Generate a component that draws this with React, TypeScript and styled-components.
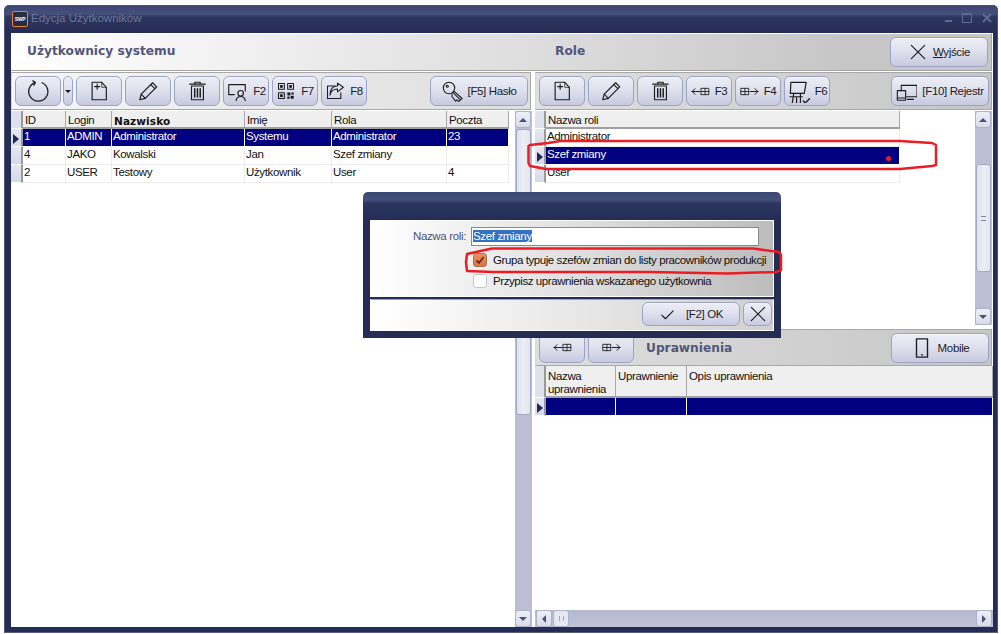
import React from 'react';
import styled, { createGlobalStyle } from 'styled-components';

const GlobalStyle = createGlobalStyle`
  html, body {
    margin: 0;
    padding: 0;
    background: #fff;
  }
  body {
    font-family: "Liberation Sans", Arial, sans-serif;
    font-size: 11.5px;
    letter-spacing: -0.35px;
    color: #111;
  }
`;

const ink = '#1c1c1c';

const Icon = ({ size = 22, children }: { size?: number; children: React.ReactNode }) => (
  <svg width={size} height={size} viewBox="0 0 24 24" fill="none" stroke={ink} strokeWidth={1.25} strokeLinecap="round" strokeLinejoin="round">
    {children}
  </svg>
);

const RefreshIcon = () => (
  <Icon size={25}>
    <path d="M15.5 3.6A9.2 9.2 0 1 1 8.6 3.4" />
    <path d="M6.6 1.8 9 3.4 7.6 6" />
  </Icon>
);
const NewIcon = () => (
  <Icon>
    <path d="M4.5 2.5H15L20 8V21.5H4.5Z" />
    <path d="M15 2.5V8H20" strokeWidth={0.8} />
    <path d="M10 4.5V10M7.2 7.2H12.8" />
  </Icon>
);
const PencilIcon = () => (
  <Icon>
    <path d="M3 21.5 4.6 15.5 17 3 21.5 7.5 9 20Z" />
    <path d="M15 5 19.5 9.5M4.6 15.5 9 20" />
  </Icon>
);
const TrashIcon = () => (
  <Icon>
    <path d="M6 6.5H19V21.5H6Z" />
    <path d="M4 4.5H21M9.5 4.5V2.5H15.5V4.5" />
    <path d="M9.5 9.5V18.5M12.5 9.5V18.5M15.5 9.5V18.5" strokeWidth={1.6} />
  </Icon>
);
const UserScreenIcon = () => (
  <Icon>
    <path d="M9 16H3V5H21V12" />
    <circle cx="16" cy="14.5" r="3" />
    <path d="M11 22.5C11.5 19 13.5 18 16 18S20.5 19 21 22.5" />
  </Icon>
);
const QrIcon = () => (
  <Icon size={20}>
    <path d="M3 3H10V10H3ZM14 3H21V10H14ZM3 14H10V21H3Z" />
    <path d="M5.5 5.5H7.5V7.5H5.5ZM16.5 5.5H18.5V7.5H16.5ZM5.5 16.5H7.5V18.5H5.5Z" fill={ink} />
    <path d="M14 14H17V17H14ZM18 18H21V21H18ZM14 19H16V21H14ZM19 14H21V16H19Z" fill={ink} strokeWidth={0.5} />
  </Icon>
);
const ShareIcon = () => (
  <Icon size={20}>
    <path d="M12 6H3V21H19V14" />
    <path d="M6 17C7 11.5 10.5 9.5 15 9.5V13L22 7.5 15 2.5V6C9 6 6 10.5 6 17Z" />
  </Icon>
);
const KeyIcon = () => (
  <Icon size={21}>
    <circle cx="8" cy="8" r="6.5" />
    <circle cx="6" cy="6" r="1.2" />
    <path d="M12.5 13 21 21.5 19 23.5 17 21.5 15.5 23 11.5 18 11.5 14.5" />
    <path d="M13.5 11.5 23 20 21 21.5" />
  </Icon>
);
const TableArrowLeft = () => (
  <Icon size={19}>
    <path d="M1.5 12H11M1.5 12 5 8.5M1.5 12 5 15.5" />
    <path d="M13 8H22.5V16H13ZM17.7 8V16M13 12H22.5" strokeWidth={1.1} />
  </Icon>
);
const TableArrowRight = () => (
  <Icon size={19}>
    <path d="M22.5 12H13M22.5 12 19 8.5M22.5 12 19 15.5" />
    <path d="M1.5 8H11V16H1.5ZM6.2 8V16M1.5 12H11" strokeWidth={1.1} />
  </Icon>
);
const BoardIcon = () => (
  <Icon size={23}>
    <path d="M4 2.5H20L18 14H3.5Z" />
    <path d="M3 17.5H16M7 14 5.5 24M14 14V24M10 17.5V24" />
    <path d="M17 22 19 24 23.5 19.5" strokeWidth={1.4} />
  </Icon>
);
const DevicesIcon = () => (
  <Icon size={21}>
    <path d="M6 11V5H24V18H12" />
    <path d="M1.5 11H11V22H1.5ZM1.5 19.5H11" />
    <path d="M13 21H20" />
  </Icon>
);
const PhoneIcon = () => (
  <Icon size={22}>
    <path d="M6 2H18V22H6Z" strokeWidth={1.5} />
    <path d="M11.5 19.5H12.5" strokeWidth={1.5} />
  </Icon>
);
const CloseIcon = ({ size = 20 }: { size?: number }) => (
  <Icon size={size}>
    <path d="M4 4 20 20M20 4 4 20" strokeWidth={1.4} />
  </Icon>
);
const CheckIcon = () => (
  <Icon size={17}>
    <path d="M4 13 9 18 20 7" strokeWidth={1.6} />
  </Icon>
);

const Page = styled.div`
  position: relative;
  width: 1001px;
  height: 634px;
  overflow: hidden;
  background: #fff;
  padding: 5px 3px 1px 4px;
  box-sizing: border-box;
`;

const Window = styled.div`
  height: 628px;
  display: flex;
  flex-direction: column;
  box-sizing: border-box;
  border: 1px solid #4c5470;
  border-bottom-color: #5a6284;
  border-radius: 5px 5px 0 0;
  background: #252d55;
  padding: 0 4px 5px 6px;
`;

const TitleBar = styled.div`
  height: 27px;
  flex: none;
  margin: 0 -4px 0 -6px;
  padding: 5px 5px 0 7px;
  box-sizing: border-box;
  display: flex;
  align-items: flex-start;
  background: linear-gradient(#3c4672 0, #44507c 8px, #2d3660 11px, #252d55 27px);
  border-radius: 4px 4px 0 0;
`;

const AppLogo = styled.div`
  width: 16px;
  height: 16px;
  box-sizing: border-box;
  border: 1px solid #e8803c;
  border-radius: 2px;
  background: #2a2d3c;
  color: #fff;
  font-size: 5px;
  font-weight: bold;
  line-height: 14px;
  text-align: center;
`;

const WindowTitle = styled.div`
  margin-left: 3px;
  font-size: 11.5px;
  line-height: 15px;
  letter-spacing: 0;
  color: #6d7898;
`;

const WindowControls = styled.div`
  margin-left: auto;
  margin-top: 2px;
  display: flex;
  align-items: flex-end;
  gap: 10px;
`;

const MinimizeGlyph = styled.div`
  width: 7px;
  height: 2px;
  margin-bottom: 1px;
  background: #5f6a8e;
`;

const MaximizeGlyph = styled.div`
  width: 8px;
  height: 7px;
  border: 1px solid #5f6a8e;
  border-top-width: 2px;
`;

const Content = styled.div`
  flex: 1;
  min-height: 0;
  display: flex;
  flex-direction: column;
  background: #fff;
`;

const Header = styled.div`
  height: 38px;
  flex: none;
  margin-right: 1px;
  box-sizing: border-box;
  padding: 3px 3px 0 16px;
  display: flex;
  align-items: flex-start;
  border-top: 1px solid #fff;
  border-bottom: 1px solid #a4a4a4;
  border-right: 1px solid #a4a4a4;
  background: linear-gradient(90deg, #fff 0, #dcdcdc 55%, #c6c6c6 85%);
`;

const SectionTitle = styled.div<{ $width?: number }>`
  width: ${({ $width }) => ($width ? `${$width}px` : 'auto')};
  font-family: "DejaVu Sans", Verdana, sans-serif;
  font-size: 12.2px;
  font-weight: bold;
  letter-spacing: 0;
  line-height: 28px;
  color: #50577a;
`;

const Body = styled.div`
  flex: 1;
  min-height: 0;
  display: flex;
  gap: 3px;
  margin-top: 1px;
`;

const LeftColumn = styled.div`
  width: 521px;
  display: flex;
  flex-direction: column;
`;

const RightColumn = styled.div`
  width: 458px;
  display: flex;
  flex-direction: column;
`;

const Toolbar = styled.div<{ $from: string; $to: string; $height?: number }>`
  height: ${({ $height }) => $height ?? 38}px;
  flex: none;
  box-sizing: border-box;
  padding-left: 3px;
  padding-right: 2px;
  margin-right: 1px;
  display: flex;
  align-items: center;
  gap: 3px;
  border: 1px solid #a8a8a8;
  border-left-color: #d8d8d8;
  background: linear-gradient(90deg, ${({ $from }) => $from}, ${({ $to }) => $to});
`;

const ToolButton = styled.div<{ $width?: number; $push?: boolean; $tight?: boolean }>`
  width: ${({ $width }) => $width ?? 46}px;
  height: 30px;
  flex: none;
  box-sizing: border-box;
  display: flex;
  align-items: center;
  justify-content: center;
  gap: 5px;
  margin-left: ${({ $push, $tight }) => ($push ? 'auto' : $tight ? '-1px' : '0')};
  border: 1px solid #9da3c4;
  border-radius: 6px;
  background: linear-gradient(#eceef6 0, #dfe1ee 45%, #c8cbe0 100%);
  box-shadow: inset 0 1px 0 #f6f7fb;
  white-space: nowrap;
  color: #1c1c1c;
`;

const Caret = styled.div`
  width: 0;
  height: 0;
  border-left: 3px solid transparent;
  border-right: 3px solid transparent;
  border-top: 3px solid #1c1c1c;
`;

const Shortcut = styled.u`
  text-decoration: underline;
`;

const GridRow = styled.div`
  flex: 1;
  min-height: 0;
  display: flex;
  margin-top: 1px;
`;

const GridArea = styled.div<{ $width?: number }>`
  width: ${({ $width }) => ($width ? `${$width}px` : 'auto')};
  flex: ${({ $width }) => ($width ? 'none' : '1')};
  background: #fff;
`;

const DataRow = styled.div<{ $cols: string; $height?: number }>`
  display: grid;
  grid-template-columns: ${({ $cols }) => $cols};
  height: ${({ $height }) => $height ?? 18}px;
`;

const Indicator = styled.div<{ $header?: boolean }>`
  box-sizing: border-box;
  display: flex;
  align-items: center;
  justify-content: center;
  background: ${({ $header }) => ($header ? '#dfe2ec' : 'linear-gradient(#e6e8f0, #d5d8e6)')};
  border-bottom: 1px solid #fff;
  border-right: 2px solid #9a9a9a;
`;

const Arrow = styled.div`
  width: 0;
  height: 0;
  margin-top: 2px;
  border-top: 5px solid transparent;
  border-bottom: 5px solid transparent;
  border-left: 6px solid #20275a;
`;

const HeadCell = styled.div<{ $bold?: boolean; $tall?: boolean }>`
  box-sizing: border-box;
  padding: ${({ $tall }) => ($tall ? '4px' : '3px')} 2px 0 2px;
  line-height: 13px;
  background: #efefef;
  border-right: 1px solid #a8a8a8;
  border-bottom: 2px solid #a0a0a0;
  overflow: hidden;
  ${({ $bold }) =>
    $bold &&
    `
    font-family: "DejaVu Sans", Verdana, sans-serif;
    font-weight: bold;
    font-size: 10.5px;
    letter-spacing: 0.1px;
    line-height: 14px;
  `}
`;

const Cell = styled.div<{ $selected?: boolean }>`
  box-sizing: border-box;
  padding: 0 1px;
  line-height: 15px;
  white-space: nowrap;
  overflow: hidden;
  color: ${({ $selected }) => ($selected ? '#fff' : '#111')};
  background: ${({ $selected }) => ($selected ? '#000080' : '#fff')};
  border-right: 1px solid ${({ $selected }) => ($selected ? '#fff' : '#ececec')};
  border-bottom: 1px solid ${({ $selected }) => ($selected ? '#fff' : '#ececec')};
`;

const ScrollGap = styled.div<{ $width: number }>`
  width: ${({ $width }) => $width}px;
  flex: none;
`;

const VScroll = styled.div`
  width: 17px;
  flex: none;
  display: flex;
  flex-direction: column;
  background: #bcbfd4;
`;

const VThumb = styled.div<{ $before: number; $height: number }>`
  height: ${({ $height }) => $height}px;
  margin-top: ${({ $before }) => $before}px;
  margin-left: 1px;
  margin-right: 1px;
  box-sizing: border-box;
  display: flex;
  align-items: center;
  justify-content: center;
  border: 1px solid #a3a8c6;
  border-radius: 3px;
  background: linear-gradient(90deg, #dfe1ec, #eceef5 50%, #e4e6ef);
`;

const Grip = styled.div`
  width: 5px;
  height: 3px;
  border-top: 1px solid #80859f;
  border-bottom: 1px solid #80859f;
`;

const ScrollButton = styled.div<{ $end?: boolean }>`
  width: 16px;
  height: 17px;
  flex: none;
  box-sizing: border-box;
  margin-top: ${({ $end }) => ($end ? 'auto' : '0')};
  display: flex;
  align-items: center;
  justify-content: center;
  border: 1px solid #aeb2cc;
  border-radius: 3px;
  background: linear-gradient(#eef0f6, #d9dbe9);
`;

const ArrowUp = styled.div`
  width: 0;
  height: 0;
  border-left: 4px solid transparent;
  border-right: 4px solid transparent;
  border-bottom: 4px solid #49507a;
`;

const ArrowDown = styled(ArrowUp)`
  border-bottom: 0;
  border-top: 4px solid #49507a;
`;

const ArrowLeft = styled.div`
  width: 0;
  height: 0;
  border-top: 4px solid transparent;
  border-bottom: 4px solid transparent;
  border-right: 4px solid #49507a;
`;

const ArrowRight = styled(ArrowLeft)`
  border-right: 0;
  border-left: 4px solid #49507a;
`;

const RolesArea = styled.div`
  height: 214px;
  flex: none;
  display: flex;
  margin-top: 1px;
  margin-right: 1px;
`;

const SectionGap = styled.div`
  height: 4px;
  flex: none;
`;

const LowerTitle = styled(SectionTitle)`
  margin-left: 9px;
  line-height: 30px;
  margin-right: auto;
`;

const PermissionsArea = styled.div`
  flex: 1;
  min-height: 0;
  display: flex;
  flex-direction: column;
`;

const PermissionsGrid = styled.div`
  flex: 1;
  min-height: 0;
  background: #fff;
`;

const HScroll = styled.div`
  height: 17px;
  flex: none;
  display: flex;
  padding: 0 1px;
  gap: 1px;
  background: linear-gradient(#b4b8d0, #c0c3d8);
`;

const HThumb = styled.div`
  width: 16px;
  box-sizing: border-box;
  display: flex;
  align-items: center;
  justify-content: center;
  border: 1px solid #aeb2cc;
  border-radius: 3px;
  background: #e6e8f1;
`;

const HGrip = styled.div`
  width: 3px;
  height: 5px;
  border-left: 1px solid #a0a4bc;
  border-right: 1px solid #a0a4bc;
`;

const HEndButton = styled(ScrollButton)`
  margin-left: auto;
  margin-top: 0;
`;

const Dialog = styled.div`
  position: absolute;
  left: 363px;
  top: 192px;
  width: 418px;
  height: 146px;
  box-sizing: border-box;
  padding: 0 7px 7px;
  display: flex;
  flex-direction: column;
  border-radius: 5px 5px 0 0;
  background: linear-gradient(#3c4672 0, #44507c 8px, #2d3660 11px, #252d55 28px);
`;

const DialogForm = styled.div`
  height: 77px;
  margin-top: 28px;
  flex: none;
  box-sizing: border-box;
  padding-top: 6px;
  display: grid;
  grid-template-columns: 95px 288px;
  grid-template-rows: 19px 20px 20px;
  column-gap: 5px;
  row-gap: 1px;
  border: 1px solid #fff;
  background: linear-gradient(90deg, #fff 0, #e0e0e0 50%, #bcbcbc 100%);
`;

const FieldLabel = styled.div`
  text-align: right;
  line-height: 18px;
  color: #4d5374;
`;

const FieldInput = styled.div`
  box-sizing: border-box;
  border: 1px solid #8a8a8a;
  background: #fff;
  padding: 2px 1px;
  line-height: 13px;
`;

const SelectedText = styled.span`
  background: #3371c4;
  color: #fff;
`;

const CheckRow = styled.div`
  grid-column: 2;
  display: flex;
  align-items: flex-end;
  gap: 6px;
  padding-left: 2px;
  line-height: 14px;
  letter-spacing: -0.42px;
  white-space: nowrap;
`;

const CheckBox = styled.div<{ $checked?: boolean }>`
  width: 14px;
  height: 14px;
  flex: none;
  box-sizing: border-box;
  display: flex;
  align-items: center;
  justify-content: center;
  border: 1px solid ${({ $checked }) => ($checked ? '#a8765a' : '#c2c6dc')};
  border-radius: 3px;
  background: ${({ $checked }) => ($checked ? 'linear-gradient(#ee8f60, #df6f3e)' : '#fff')};
`;

const DialogFooter = styled.div`
  flex: 1;
  margin-top: 2px;
  box-sizing: border-box;
  padding: 2px 1px 0 0;
  display: flex;
  justify-content: flex-end;
  gap: 3px;
  border: 1px solid #fff;
  border-top-color: #a4a4a4;
  background: linear-gradient(90deg, #fff 0, #e8e8e8 50%, #d0d0d0 100%);
`;

const DialogButton = styled(ToolButton)`
  height: 24px;
  gap: 10px;
`;

const Markup = styled.svg`
  position: absolute;
  left: 0;
  top: 0;
  pointer-events: none;
`;

type Row = string[];

const userCols = '12px 43px 46px 133px 87px 115px 62px';
const users: Row[] = [
  ['1', 'ADMIN', 'Administrator', 'Systemu', 'Administrator', '23'],
  ['4', 'JAKO', 'Kowalski', 'Jan', 'Szef zmiany', ''],
  ['2', 'USER', 'Testowy', 'Użytkownik', 'User', '4'],
];

const roleCols = '11px 354px';
const roles = ['Administrator', 'Szef zmiany', 'User'];

const permCols = '11px 70px 71px 1fr';

const App = () => (
  <Page>
    <GlobalStyle />
    <Window>
      <TitleBar>
        <AppLogo>SWP</AppLogo>
        <WindowTitle>Edycja Użytkowników</WindowTitle>
        <WindowControls>
          <MinimizeGlyph />
          <MaximizeGlyph />
          <svg width="10" height="10" viewBox="0 0 10 10" stroke="#5f6a8e" strokeWidth="2">
            <path d="M1 1 9 9M9 1 1 9" />
          </svg>
        </WindowControls>
      </TitleBar>
      <Content>
        <Header>
          <SectionTitle $width={528}>Użytkownicy systemu</SectionTitle>
          <SectionTitle>Role</SectionTitle>
          <ToolButton $width={98} $push>
            <CloseIcon />
            <span>
              <Shortcut>Wyj</Shortcut>ście
            </span>
          </ToolButton>
        </Header>
        <Body>
          <LeftColumn>
            <Toolbar $from="#f6f6f6" $to="#dedede">
              <ToolButton><RefreshIcon /></ToolButton>
              <ToolButton $width={10} $tight><Caret /></ToolButton>
              <ToolButton><NewIcon /></ToolButton>
              <ToolButton><PencilIcon /></ToolButton>
              <ToolButton><TrashIcon /></ToolButton>
              <ToolButton><UserScreenIcon /><span>F2</span></ToolButton>
              <ToolButton><QrIcon /><span>F7</span></ToolButton>
              <ToolButton><ShareIcon /><span>F8</span></ToolButton>
              <ToolButton $width={98} $push><KeyIcon /><span>[F5] Hasło</span></ToolButton>
            </Toolbar>
            <GridRow>
              <GridArea $width={498}>
                <DataRow $cols={userCols}>
                  <Indicator $header />
                  <HeadCell>ID</HeadCell>
                  <HeadCell>Login</HeadCell>
                  <HeadCell $bold>Nazwisko</HeadCell>
                  <HeadCell>Imię</HeadCell>
                  <HeadCell>Rola</HeadCell>
                  <HeadCell>Poczta</HeadCell>
                </DataRow>
                {users.map((row, index) => (
                  <DataRow $cols={userCols} key={row[0]}>
                    <Indicator>{index === 0 && <Arrow />}</Indicator>
                    {row.map((text, col) => (
                      <Cell $selected={index === 0} key={col}>{text}</Cell>
                    ))}
                  </DataRow>
                ))}
              </GridArea>
              <ScrollGap $width={6} />
              <VScroll>
                <ScrollButton><ArrowUp /></ScrollButton>
                <VThumb $before={1} $height={286} />
                <ScrollButton $end><ArrowDown /></ScrollButton>
              </VScroll>
            </GridRow>
          </LeftColumn>
          <RightColumn>
            <Toolbar $from="#e0e0e0" $to="#c6c6c6">
              <ToolButton><NewIcon /></ToolButton>
              <ToolButton><PencilIcon /></ToolButton>
              <ToolButton><TrashIcon /></ToolButton>
              <ToolButton><TableArrowLeft /><span>F3</span></ToolButton>
              <ToolButton><TableArrowRight /><span>F4</span></ToolButton>
              <ToolButton><BoardIcon /><span>F6</span></ToolButton>
              <ToolButton $width={98} $push><DevicesIcon /><span>[F10] Rejestr</span></ToolButton>
            </Toolbar>
            <RolesArea>
              <GridArea>
                <DataRow $cols={roleCols}>
                  <Indicator $header />
                  <HeadCell>Nazwa roli</HeadCell>
                </DataRow>
                {roles.map((role, index) => (
                  <DataRow $cols={roleCols} key={role}>
                    <Indicator>{index === 1 && <Arrow />}</Indicator>
                    <Cell $selected={index === 1}>{role}</Cell>
                  </DataRow>
                ))}
              </GridArea>
              <VScroll>
                <ScrollButton><ArrowUp /></ScrollButton>
                <VThumb $before={36} $height={108}><Grip /></VThumb>
                <ScrollButton $end><ArrowDown /></ScrollButton>
              </VScroll>
            </RolesArea>
            <SectionGap />
            <Toolbar $from="#dedede" $to="#c6c6c6" $height={37}>
              <ToolButton><TableArrowLeft /></ToolButton>
              <ToolButton><TableArrowRight /></ToolButton>
              <LowerTitle>Uprawnienia</LowerTitle>
              <ToolButton $width={98}><PhoneIcon /><span>Mobile</span></ToolButton>
            </Toolbar>
            <PermissionsArea>
              <PermissionsGrid>
                <DataRow $cols={permCols} $height={32}>
                  <Indicator $header />
                  <HeadCell $tall>Nazwa uprawnienia</HeadCell>
                  <HeadCell $tall>Uprawnienie</HeadCell>
                  <HeadCell $tall>Opis uprawnienia</HeadCell>
                </DataRow>
                <DataRow $cols={permCols}>
                  <Indicator><Arrow /></Indicator>
                  <Cell $selected />
                  <Cell $selected />
                  <Cell $selected />
                </DataRow>
              </PermissionsGrid>
              <HScroll>
                <ScrollButton><ArrowLeft /></ScrollButton>
                <HThumb><HGrip /></HThumb>
                <HEndButton><ArrowRight /></HEndButton>
              </HScroll>
            </PermissionsArea>
          </RightColumn>
        </Body>
      </Content>
    </Window>

    <Dialog>
      <DialogForm>
        <FieldLabel>Nazwa roli:</FieldLabel>
        <FieldInput><SelectedText>Szef zmiany</SelectedText></FieldInput>
        <CheckRow>
          <CheckBox $checked>
            <svg width="10" height="10" viewBox="0 0 10 10" fill="none" stroke="#5a3020" strokeWidth="1.8">
              <path d="M1.5 5.5 4 8 8.5 2" />
            </svg>
          </CheckBox>
          <span>Grupa typuje szefów zmian do listy pracowników produkcji</span>
        </CheckRow>
        <CheckRow>
          <CheckBox />
          <span>Przypisz uprawnienia wskazanego użytkownia</span>
        </CheckRow>
      </DialogForm>
      <DialogFooter>
        <DialogButton $width={98}><CheckIcon /><span>[F2] OK</span></DialogButton>
        <DialogButton $width={29}><CloseIcon /></DialogButton>
      </DialogFooter>
    </Dialog>

    <Markup width="1001" height="634" viewBox="0 0 1001 634" fill="none" stroke="#ed1c24" strokeWidth="2.5" strokeLinejoin="round">
      <path d="M530 145 548 143 560 141H900L932 143 936 145V165L932 166 900 169H546L530 166 528.5 163V146Z" />
      <path d="M467 254 492 248.5H640L753 248.5 779 252 781 255V270L776 272 727 273.5 650 272 493 272 467 271 466 262Z" />
      <circle cx="888.5" cy="158.5" r="2.5" fill="#ed1c24" stroke="none" />
    </Markup>
  </Page>
);

export default App;
